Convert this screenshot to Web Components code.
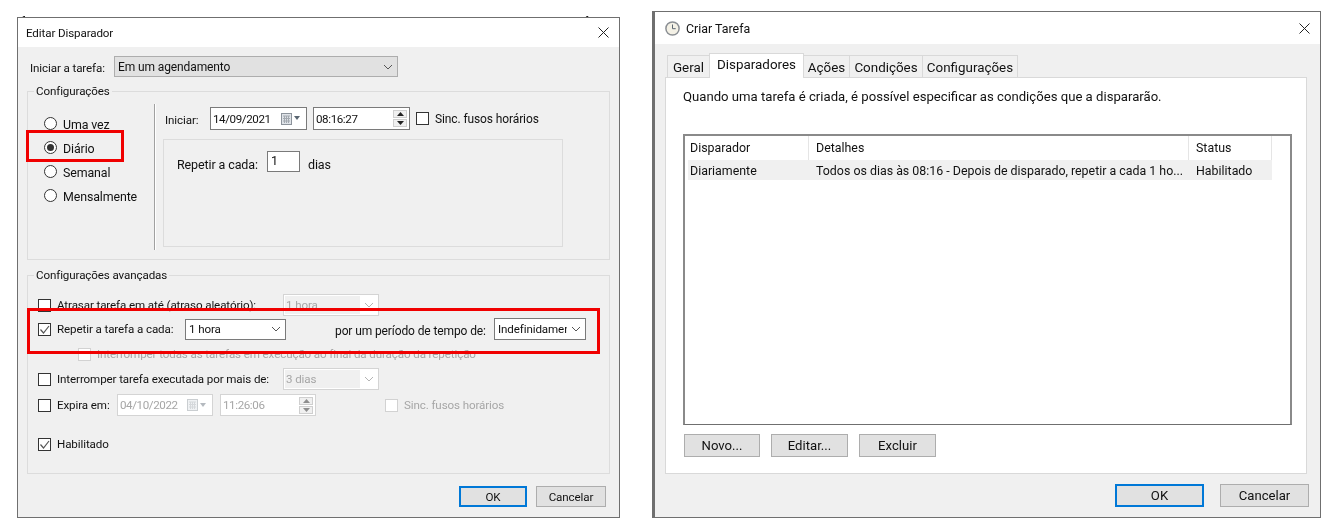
<!DOCTYPE html>
<html lang="pt-BR">
<head>
<meta charset="utf-8">
<title>Agendador de Tarefas</title>
<style>
  html, body { margin: 0; background: #fff; }
  body {
    width: 1332px;
    height: 529px;
    overflow: hidden;
    display: flex;
    align-items: flex-start;
    font: 11.6px Roboto, "Open Sans", sans-serif;
    letter-spacing: -.11px;
    color: #111;
    filter: blur(.3px);
  }
  trigger-dialog { margin: 14px 0 0 17px; }
  task-dialog { margin: 11px 0 0 32px; font-size: 13.15px; letter-spacing: 0; }
</style>
</head>
<body>
<trigger-dialog></trigger-dialog>
<task-dialog></task-dialog>

<script>
const CHEVRON = `<svg width="10" height="6" viewBox="0 0 10 6"><polyline points="1,1 5,5 9,1" fill="none" stroke="currentColor"/></svg>`;

class WinWindow extends HTMLElement {
  constructor() {
    super();
    this.attachShadow({ mode: 'open' }).innerHTML = `
      <style>
        :host { display: flex; flex-direction: column; box-sizing: border-box; background: #f0f0f0; border: 1px solid #6f6f6f; }
        header { flex: none; display: flex; align-items: center; gap: 6px; background: #fff; height: var(--title-h, 29px); padding: 0 10px 0 var(--title-x, 8px); }
        h1 { flex: 1; margin: 0; font: inherit; font-size: var(--title-size, inherit); }
        svg { display: block; }
        ::slotted([slot=icon]) { display: block; }
      </style>
      <header>
        <slot name="icon"></slot>
        <h1>${this.getAttribute('caption')}</h1>
        <svg width="11" height="11" viewBox="0 0 11 11"><path d="M.5.5l10 10M10.5.5l-10 10" stroke="#222" fill="none"/></svg>
      </header>
      <slot></slot>`;
  }
}

class WinGroup extends HTMLElement {
  constructor() {
    super();
    this.attachShadow({ mode: 'open' }).innerHTML = `
      <style>
        :host { display: block; box-sizing: border-box; border: 1px solid #dcdcdc; }
        .legend { width: fit-content; height: 16px; line-height: 16px; margin: -9px 0 -7px 6px; padding: 0 2px; background: #f0f0f0; }
      </style>
      <div class="legend">${this.getAttribute('legend')}</div>
      <slot></slot>`;
  }
}

class WinButton extends HTMLElement {
  constructor() {
    super();
    this.attachShadow({ mode: 'open' }).innerHTML = `
      <style>
        :host { display: flex; align-items: center; justify-content: center; box-sizing: border-box; background: #e1e1e1; border: 1px solid #adadad; }
        :host([primary]) { border: 2px solid #0078d7; }
      </style>
      <slot></slot>`;
  }
}

class WinCheck extends HTMLElement {
  constructor() {
    super();
    const tick = this.hasAttribute('checked')
      ? `<svg width="11" height="11" viewBox="0 0 11 11"><polyline points="1.5,5.5 4.5,9 10,2" fill="none" stroke="#555" stroke-width="1.2"/></svg>` : '';
    this.attachShadow({ mode: 'open' }).innerHTML = `
      <style>
        :host { display: inline-flex; align-items: center; gap: 6px; white-space: nowrap; }
        :host([disabled]) { color: #a6a6a6; }
        .box { flex: none; box-sizing: border-box; width: 13px; height: 13px; background: #fff; border: 1px solid #333; display: flex; }
        :host([disabled]) .box { border-color: #d2d2d2; }
        svg { display: block; }
      </style>
      <span class="box">${tick}</span><slot></slot>`;
  }
}

class WinRadio extends HTMLElement {
  constructor() {
    super();
    this.attachShadow({ mode: 'open' }).innerHTML = `
      <style>
        :host { display: flex; align-items: center; gap: 6px; height: 24px; font-size: 12.4px; }
        .dot { flex: none; box-sizing: border-box; width: 13px; height: 13px; border: 1px solid #333; border-radius: 50%; background: #fff; display: flex; align-items: center; justify-content: center; }
        :host([checked]) .dot::after { content: ""; width: 7px; height: 7px; border-radius: 50%; background: #333; }
        .text { padding-top: 2px; }
      </style>
      <span class="dot"></span><span class="text"><slot></slot></span>`;
  }
}

class WinSelect extends HTMLElement {
  constructor() {
    super();
    this.attachShadow({ mode: 'open' }).innerHTML = `
      <style>
        :host { display: flex; align-items: stretch; box-sizing: border-box; height: 22px; background: #fff; border: 1px solid #7a7a7a; color: #111; }
        :host([gray]) { background: #e1e1e1; border-color: #adadad; }
        :host([disabled]) { border-color: #d4d4d4; color: #a6a6a6; }
        .value { flex: 1; min-width: 0; overflow: hidden; white-space: nowrap; display: flex; align-items: center; padding-left: 3px; }
        :host([disabled]) .value { margin: 1px 0 1px 1px; background: #f0f0f0; padding-left: 1px; }
        .arrow { flex: none; width: 18px; display: flex; align-items: center; justify-content: center; color: #555; }
        :host([disabled]) .arrow { color: #b4b4b4; }
      </style>
      <span class="value"><slot></slot></span>
      <span class="arrow">${CHEVRON}</span>`;
  }
}

class WinDate extends HTMLElement {
  constructor() {
    super();
    this.attachShadow({ mode: 'open' }).innerHTML = `
      <style>
        :host { display: flex; align-items: center; box-sizing: border-box; height: 23px; padding: 0 5px 0 2px; background: #fff; border: 1px solid #7a7a7a; gap: 1px; letter-spacing: -.4px; }
        :host([disabled]) { height: 22px; border-color: #d4d4d4; color: #a6a6a6; }
        .value { flex: 1; }
        svg { display: block; flex: none; }
        :host([disabled]) svg { opacity: .45; }
      </style>
      <span class="value"><slot></slot></span>
      <svg width="11" height="12" viewBox="0 0 11 12">
        <rect x=".5" y=".5" width="10" height="11" fill="#dfe3e8" stroke="#8c939b"/>
        <path d="M2 3h7M2 5.5h7M2 8h7M3.5 3v7M5.5 3v7M7.5 3v7" stroke="#a3a9b0" fill="none"/>
      </svg>
      <svg width="8" height="5" viewBox="0 0 8 5"><path d="M1 0h6L4 4z" fill="#5a6672"/></svg>`;
  }
}

class WinTime extends HTMLElement {
  constructor() {
    super();
    this.attachShadow({ mode: 'open' }).innerHTML = `
      <style>
        :host { display: flex; align-items: center; box-sizing: border-box; height: 23px; padding: 0 2px; background: #fff; border: 1px solid #7a7a7a; letter-spacing: -.4px; }
        :host([disabled]) { height: 22px; border-color: #d4d4d4; color: #a6a6a6; }
        .value { flex: 1; }
        .spin { flex: none; width: 14px; display: flex; flex-direction: column; gap: 1px; }
        .spin span { height: 8px; box-sizing: border-box; background: #f0f0f0; border: 1px solid #cfcfcf; display: flex; align-items: center; justify-content: center; }
        svg { display: block; }
        :host([disabled]) svg path { fill: #8d8d8d; }
      </style>
      <span class="value"><slot></slot></span>
      <span class="spin">
        <span><svg width="7" height="4" viewBox="0 0 7 4"><path d="M3.5 0L7 4H0z" fill="#222"/></svg></span>
        <span><svg width="7" height="4" viewBox="0 0 7 4"><path d="M0 0h7L3.5 4z" fill="#222"/></svg></span>
      </span>`;
  }
}

class RedMark extends HTMLElement {
  constructor() {
    super();
    this.attachShadow({ mode: 'open' }).innerHTML = `
      <style>:host { position: absolute; box-sizing: border-box; border: 3px solid #f00000; pointer-events: none; }</style>`;
  }
}

class BehindRow extends HTMLElement {
  constructor() {
    super();
    this.attachShadow({ mode: 'open' }).innerHTML = `
      <style>
        :host { display: flex; height: 3px; overflow: hidden; line-height: 14px; white-space: nowrap; }
        span { display: block; }
        .name { width: 130px; padding-left: 4px; box-sizing: border-box; }
      </style>
      <span class="name">fas</span>
      <span>Em execução - Todos os dias às 08:16 - Depois de disparado, repetir a cada 1 hora indefinida</span>`;
  }
}

class TriggerDialog extends HTMLElement {
  constructor() {
    super();
    this.attachShadow({ mode: 'open' }).innerHTML = `
      <style>
        :host { display: block; position: relative; width: 603px; }
        win-window { height: 501px; }
        .body { padding: 9px 9px 0; display: flex; flex-direction: column; }
        .start { display: flex; align-items: center; height: 21px; padding-left: 3px; }
        .start span { width: 84px; padding-top: 2px; }
        .start win-select { width: 284px; height: 21px; font-size: 12px; }
        .conf { height: 169px; margin-top: 14px; }
        .conf-inner { display: flex; height: 167px; }
        .radios { width: 126px; box-sizing: border-box; padding: 19px 0 0 16px; }
        .sep { width: 1px; height: 146px; margin-top: 12px; background: #a0a0a0; border-right: 1px solid #fff; }
        .when { padding: 15px 0 0 9px; }
        .when-row { display: flex; align-items: center; gap: 6px; }
        .when-row > span { width: 39px; padding-top: 2px; }
        .when-row win-date, .when-row win-time { width: 97px; }
        .when-row win-check { font-size: 12px; }
        .panel { box-sizing: border-box; width: 400px; height: 108px; margin: 9px 0 0 -2px; border: 1px solid #dcdcdc; padding: 11px 0 0 13px; display: flex; align-items: flex-start; font-size: 12.5px; }
        .panel span { line-height: 21px; padding-top: 3px; }
        .panel .lbl { width: 90px; }
        .panel .num { box-sizing: border-box; width: 33px; height: 21px; margin-right: 8px; padding: 0 0 0 3px; background: #fff; border: 1px solid #7a7a7a; line-height: 17px; }
        .adv { height: 199px; margin-top: 15px; }
        .adv-inner { padding: 18px 0 0 10px; display: flex; flex-direction: column; }
        .row { display: flex; align-items: center; height: 22px; }
        .row + .row { margin-top: 2px; }
        .row.r3 { height: 20px; margin-top: 4px; padding-left: 40px; }
        .row.r4 { margin-top: 4px; }
        .row.r5 { margin-top: 4px; }
        .row.r6 { margin-top: 17px; }
        .period { width: 159px; margin-left: 49px; padding-top: 3px; white-space: nowrap; font-size: 12px; }
        .foot { display: flex; justify-content: flex-end; gap: 9px; margin-top: 12px; padding-right: 4px; }
        .foot win-button { height: 21px; }
      </style>
      <behind-row></behind-row>
      <win-window caption="Editar Disparador">
        <div class="body">
          <div class="start">
            <span>Iniciar a tarefa:</span>
            <win-select gray>Em um agendamento</win-select>
          </div>
          <win-group class="conf" legend="Configurações">
            <div class="conf-inner">
              <div class="radios">
                <win-radio>Uma vez</win-radio>
                <win-radio checked>Diário</win-radio>
                <win-radio>Semanal</win-radio>
                <win-radio>Mensalmente</win-radio>
              </div>
              <div class="sep"></div>
              <div class="when">
                <div class="when-row">
                  <span>Iniciar:</span>
                  <win-date>14/09/2021</win-date>
                  <win-time>08:16:27</win-time>
                  <win-check>Sinc. fusos horários</win-check>
                </div>
                <div class="panel">
                  <span class="lbl">Repetir a cada:</span>
                  <span class="num">1</span>
                  <span>dias</span>
                </div>
              </div>
            </div>
          </win-group>
          <win-group class="adv" legend="Configurações avançadas">
            <div class="adv-inner">
              <div class="row">
                <win-check style="width:245px">Atrasar tarefa em até (atraso aleatório):</win-check>
                <win-select disabled style="width:96px">1 hora</win-select>
              </div>
              <div class="row">
                <win-check checked style="width:147px">Repetir a tarefa a cada:</win-check>
                <win-select style="width:101px;height:21px">1 hora</win-select>
                <span class="period">por um período de tempo de:</span>
                <win-select style="width:92px">Indefinidamente</win-select>
              </div>
              <div class="row r3">
                <win-check disabled>Interromper todas as tarefas em execução ao final da duração da repetição</win-check>
              </div>
              <div class="row r4">
                <win-check style="width:245px">Interromper tarefa executada por mais de:</win-check>
                <win-select disabled style="width:96px">3 dias</win-select>
              </div>
              <div class="row r5">
                <win-check style="width:79px">Expira em:</win-check>
                <win-date disabled style="width:96px">04/10/2022</win-date>
                <win-time disabled style="width:96px;margin-left:7px">11:26:06</win-time>
                <win-check disabled style="margin-left:69px">Sinc. fusos horários</win-check>
              </div>
              <div class="row r6">
                <win-check checked>Habilitado</win-check>
              </div>
            </div>
          </win-group>
          <div class="foot">
            <win-button primary style="width:68px">OK</win-button>
            <win-button style="width:70px">Cancelar</win-button>
          </div>
        </div>
      </win-window>
      <red-mark style="left:9px;top:116px;width:98px;height:32px"></red-mark>
      <red-mark style="left:10px;top:294px;width:573px;height:46px"></red-mark>`;
  }
}

class TabStrip extends HTMLElement {
  constructor() {
    super();
    const tabs = [['Geral', 42], ['Disparadores', 94], ['Ações', 46], ['Condições', 73], ['Configurações', 95]];
    const active = Number(this.getAttribute('active'));
    this.attachShadow({ mode: 'open' }).innerHTML = `
      <style>
        :host { display: flex; align-items: flex-end; height: 24px; padding-left: 3px; font-size: 13.4px; }
        div { box-sizing: border-box; height: 22px; display: flex; align-items: center; justify-content: center; background: #f0f0f0; border: 1px solid #d9d9d9; border-bottom: 0; margin-left: -1px; padding-top: 1px; }
        div.on { height: 25px; margin-bottom: -1px; padding: 0 0 3px; background: #fff; position: relative; }
      </style>
      ${tabs.map(([name, w], i) => `<div class="${i === active ? 'on' : ''}" style="width:${w + 1}px">${name}</div>`).join('')}`;
  }
}

class TriggerList extends HTMLElement {
  constructor() {
    super();
    this.attachShadow({ mode: 'open' }).innerHTML = `
      <style>
        :host { display: block; box-sizing: border-box; background: #fff; border: 2px solid #8a8a8a; border-bottom-width: 1px; border-bottom-color: #6f6f6f; font-size: 12.4px; }
        .line { display: grid; grid-template-columns: 124px 380px 83px; align-items: center; }
        .head { height: 24px; }
        .head span { height: 100%; line-height: 24px; box-sizing: border-box; border-right: 1px solid #e5e5e5; padding-left: 7px; }
        .head span:first-child { padding-left: 5px; }
        .data { height: 20px; margin-left: 3px; grid-template-columns: 121px 380px 83px; background: #f0f0f0; width: 584px; }
        .data span { padding-left: 7px; white-space: nowrap; }
        .data span:first-child { padding-left: 2px; }
      </style>
      <div class="line head"><span>Disparador</span><span>Detalhes</span><span>Status</span></div>
      <div class="line data"><span>Diariamente</span><span>Todos os dias às 08:16 - Depois de disparado, repetir a cada 1 ho...</span><span>Habilitado</span></div>`;
  }
}

class TaskDialog extends HTMLElement {
  constructor() {
    super();
    this.attachShadow({ mode: 'open' }).innerHTML = `
      <style>
        :host { display: block; width: 669px; }
        win-window { height: 507px; border-left-width: 3px; --title-h: 32px; --title-x: 10px; --title-size: 12.4px; }
        .body { padding: 9px 13px 0 10px; display: flex; flex-direction: column; }
        .panel { box-sizing: border-box; height: 397px; background: #fff; border: 1px solid #d9d9d9; padding: 11px 0 0 17px; }
        .intro { line-height: 16px; }
        trigger-list { width: 609px; height: 291px; margin-top: 29px; }
        .actions { display: flex; gap: 11px; margin: 9px 0 0 1px; }
        .actions win-button { height: 23px; }
        .foot { display: flex; justify-content: flex-end; gap: 16px; margin: 10px -2px 0 0; }
        .foot win-button { width: 89px; height: 23px; }
      </style>
      <win-window caption="Criar Tarefa">
        <svg slot="icon" width="15" height="15" viewBox="0 0 15 15">
          <circle cx="7.5" cy="7.5" r="6.6" fill="#f4f1e6" stroke="#8b8f94" stroke-width="1.5"/>
          <path d="M7.5 3.5v4.2h3.2" fill="none" stroke="#5c6670" stroke-width="1"/>
        </svg>
        <div class="body">
          <tab-strip active="1"></tab-strip>
          <div class="panel">
            <div class="intro">Quando uma tarefa é criada, é possível especificar as condições que a dispararão.</div>
            <trigger-list></trigger-list>
            <div class="actions">
              <win-button style="width:76px">Novo...</win-button>
              <win-button style="width:77px">Editar...</win-button>
              <win-button style="width:77px">Excluir</win-button>
            </div>
          </div>
          <div class="foot">
            <win-button primary>OK</win-button>
            <win-button>Cancelar</win-button>
          </div>
        </div>
      </win-window>`;
  }
}

customElements.define('win-window', WinWindow);
customElements.define('win-group', WinGroup);
customElements.define('win-button', WinButton);
customElements.define('win-check', WinCheck);
customElements.define('win-radio', WinRadio);
customElements.define('win-select', WinSelect);
customElements.define('win-date', WinDate);
customElements.define('win-time', WinTime);
customElements.define('red-mark', RedMark);
customElements.define('behind-row', BehindRow);
customElements.define('tab-strip', TabStrip);
customElements.define('trigger-list', TriggerList);
customElements.define('trigger-dialog', TriggerDialog);
customElements.define('task-dialog', TaskDialog);
</script>
</body>
</html>
